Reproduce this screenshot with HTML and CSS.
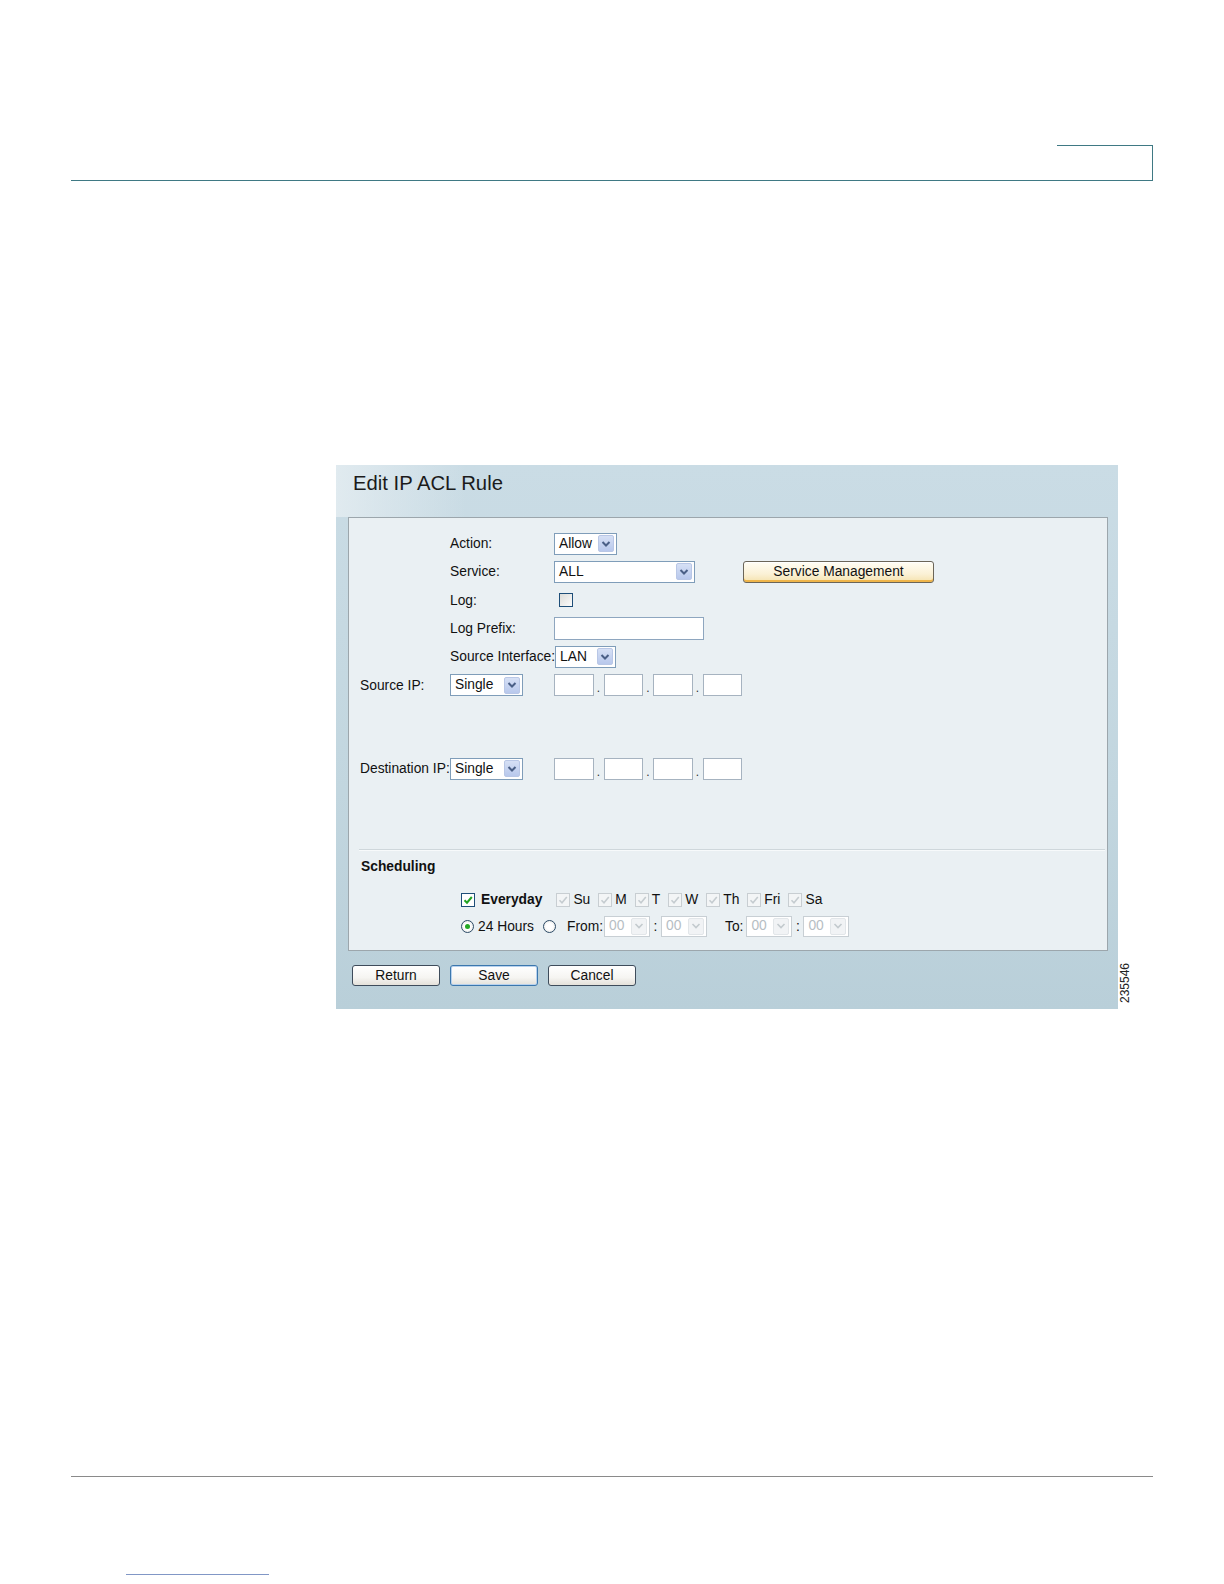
FILE: index.html
```html
<!DOCTYPE html>
<html>
<head>
<meta charset="utf-8">
<title>Edit IP ACL Rule</title>
<link rel="stylesheet" href="styles.css">
</head>
<body>
<div class="page">
  <header class="top"><div class="tab"></div></header>

  <section class="panel">
    <h1 class="panel-title">Edit IP ACL Rule</h1>
    <div class="box">
      <div class="form">
        <div class="row">
          <span class="c1"></span><span class="c2">Action:</span>
          <span class="sel w63"><span class="val">Allow</span><span class="arrow"><svg viewBox="0 0 10 8" width="10" height="8"><path d="M1.5 2 L5 5.5 L8.5 2" fill="none" stroke="#4a5f86" stroke-width="2"/></svg></span></span>
        </div>
        <div class="row">
          <span class="c1"></span><span class="c2">Service:</span>
          <span class="sel w140"><span class="val">ALL</span><span class="arrow"><svg viewBox="0 0 10 8" width="10" height="8"><path d="M1.5 2 L5 5.5 L8.5 2" fill="none" stroke="#4a5f86" stroke-width="2"/></svg></span></span>
          <button class="btn-sm">Service Management</button>
        </div>
        <div class="row">
          <span class="c1"></span><span class="c2">Log:</span>
          <span class="cb cb-log"></span>
        </div>
        <div class="row">
          <span class="c1"></span><span class="c2">Log Prefix:</span>
          <span class="input w150"></span>
        </div>
        <div class="row">
          <span class="c1"></span><span class="c2">Source Interface:</span>
          <span class="sel w61"><span class="val">LAN</span><span class="arrow"><svg viewBox="0 0 10 8" width="10" height="8"><path d="M1.5 2 L5 5.5 L8.5 2" fill="none" stroke="#4a5f86" stroke-width="2"/></svg></span></span>
        </div>
        <div class="row">
          <span class="c1">Source IP:</span>
          <span class="c2"><span class="sel w73"><span class="val">Single</span><span class="arrow"><svg viewBox="0 0 10 8" width="10" height="8"><path d="M1.5 2 L5 5.5 L8.5 2" fill="none" stroke="#4a5f86" stroke-width="2"/></svg></span></span></span>
          <span class="ip"><span class="octet"></span><span class="dot">.</span><span class="octet"></span><span class="dot">.</span><span class="octet"></span><span class="dot">.</span><span class="octet"></span></span>
        </div>
        <div class="row row-dest">
          <span class="c1">Destination IP:</span>
          <span class="c2"><span class="sel w73"><span class="val">Single</span><span class="arrow"><svg viewBox="0 0 10 8" width="10" height="8"><path d="M1.5 2 L5 5.5 L8.5 2" fill="none" stroke="#4a5f86" stroke-width="2"/></svg></span></span></span>
          <span class="ip"><span class="octet"></span><span class="dot">.</span><span class="octet"></span><span class="dot">.</span><span class="octet"></span><span class="dot">.</span><span class="octet"></span></span>
        </div>
      </div>

      <div class="sched">
        <div class="sched-title">Scheduling</div>
        <div class="sched-row">
          <span class="cb cb-on"><svg viewBox="0 0 12 12" width="12" height="12"><path d="M2.5 6.2 L5 8.7 L9.8 3" fill="none" stroke="#22a322" stroke-width="2"/></svg></span>
          <span class="every">Everyday</span>
          <span class="day"><span class="cb cb-dis"><svg viewBox="0 0 12 12" width="12" height="12"><path d="M2.5 6.2 L5 8.7 L9.8 3" fill="none" stroke="#c5ccd0" stroke-width="1.6"/></svg></span>Su</span>
          <span class="day"><span class="cb cb-dis"><svg viewBox="0 0 12 12" width="12" height="12"><path d="M2.5 6.2 L5 8.7 L9.8 3" fill="none" stroke="#c5ccd0" stroke-width="1.6"/></svg></span>M</span>
          <span class="day"><span class="cb cb-dis"><svg viewBox="0 0 12 12" width="12" height="12"><path d="M2.5 6.2 L5 8.7 L9.8 3" fill="none" stroke="#c5ccd0" stroke-width="1.6"/></svg></span>T</span>
          <span class="day"><span class="cb cb-dis"><svg viewBox="0 0 12 12" width="12" height="12"><path d="M2.5 6.2 L5 8.7 L9.8 3" fill="none" stroke="#c5ccd0" stroke-width="1.6"/></svg></span>W</span>
          <span class="day"><span class="cb cb-dis"><svg viewBox="0 0 12 12" width="12" height="12"><path d="M2.5 6.2 L5 8.7 L9.8 3" fill="none" stroke="#c5ccd0" stroke-width="1.6"/></svg></span>Th</span>
          <span class="day"><span class="cb cb-dis"><svg viewBox="0 0 12 12" width="12" height="12"><path d="M2.5 6.2 L5 8.7 L9.8 3" fill="none" stroke="#c5ccd0" stroke-width="1.6"/></svg></span>Fri</span>
          <span class="day"><span class="cb cb-dis"><svg viewBox="0 0 12 12" width="12" height="12"><path d="M2.5 6.2 L5 8.7 L9.8 3" fill="none" stroke="#c5ccd0" stroke-width="1.6"/></svg></span>Sa</span>
        </div>
        <div class="sched-row">
          <span class="radio radio-on"></span><span class="r-label">24 Hours</span>
          <span class="radio radio-from"></span><span class="from">From:</span>
          <span class="sel sel-dis w46"><span class="val">00</span><span class="arrow"><svg viewBox="0 0 10 8" width="10" height="8"><path d="M1.5 2 L5 5.5 L8.5 2" fill="none" stroke="#c3cace" stroke-width="1.6"/></svg></span></span>
          <span class="colon">:</span>
          <span class="sel sel-dis w46"><span class="val">00</span><span class="arrow"><svg viewBox="0 0 10 8" width="10" height="8"><path d="M1.5 2 L5 5.5 L8.5 2" fill="none" stroke="#c3cace" stroke-width="1.6"/></svg></span></span>
          <span class="to">To:</span>
          <span class="sel sel-dis w46"><span class="val">00</span><span class="arrow"><svg viewBox="0 0 10 8" width="10" height="8"><path d="M1.5 2 L5 5.5 L8.5 2" fill="none" stroke="#c3cace" stroke-width="1.6"/></svg></span></span>
          <span class="colon">:</span>
          <span class="sel sel-dis w46"><span class="val">00</span><span class="arrow"><svg viewBox="0 0 10 8" width="10" height="8"><path d="M1.5 2 L5 5.5 L8.5 2" fill="none" stroke="#c3cace" stroke-width="1.6"/></svg></span></span>
        </div>
      </div>
    </div>

    <div class="buttons">
      <button class="btn">Return</button>
      <button class="btn btn-save">Save</button>
      <button class="btn">Cancel</button>
    </div>
    <span class="figno">235546</span>
  </section>

  <footer class="foot"></footer>
  <div class="link-line"></div>
</div>
</body>
</html>
```

FILE: styles.css
```css
* { box-sizing: border-box; }
html, body { margin: 0; padding: 0; background: #fff; }
body { font-family: "Liberation Sans", Arial, sans-serif; color: #111; }

.page { width: 1224px; height: 1584px; padding-left: 71px; overflow: hidden; }

.top {
  width: 1082px;
  height: 181px;
  padding-top: 145px;
  border-bottom: 1px solid #3f7984;
  display: flex;
  justify-content: flex-end;
}
.tab {
  width: 96px;
  height: 35px;
  border-top: 1px solid #3f7984;
  border-right: 1px solid #3f7984;
}

.panel {
  position: relative;
  width: 782px;
  height: 544px;
  margin-top: 284px;
  margin-left: 265px;
  background: linear-gradient(to bottom, #cadce5 0%, #c2d6df 60%, #b9cfd9 100%);
}
.panel::before {
  content: "";
  position: absolute;
  left: 0; top: 0; width: 130px; height: 52px;
  background: linear-gradient(to right, rgba(230,238,242,0.8), rgba(230,238,242,0));
  pointer-events: none;
}
.panel-title {
  position: relative;
  margin: 0;
  height: 52px;
  padding: 6px 0 0 17px;
  font-size: 20.3px;
  font-weight: normal;
  line-height: 24px;
  color: #1b1b1b;
}

.box {
  margin-left: 12px;
  width: 760px;
  height: 434px;
  border: 1px solid #9ca6ac;
  background: #eaf0f3;
  padding-top: 11.5px;
}

.form { padding-left: 11px; font-size: 13.8px; }
.row { display: flex; align-items: center; height: 28.3px; white-space: nowrap; }
.row-dest { margin-top: 55.5px; }
.c1 { flex: 0 0 90px; }
.c2 { flex: 0 0 auto; min-width: 104px; display: flex; align-items: center; }

.sel {
  display: inline-flex;
  align-items: center;
  justify-content: space-between;
  height: 22px;
  background: #fff;
  border: 1px solid #7f9db9;
  padding: 0 2px 0 4px;
  color: #111;
}
.sel .val { line-height: 18px; }
.arrow {
  width: 16px;
  height: 17px;
  border-radius: 2px;
  background: linear-gradient(to bottom, #d6e0f5, #b8c8ec);
  border: 1px solid #b9c7e6;
  display: flex;
  align-items: center;
  justify-content: center;
}
.w63 { width: 63px; }
.w140 { width: 140.5px; }
.w61 { width: 61px; }
.w73 { width: 73px; }
.w46 { width: 46px; height: 21.5px; }

.sel-dis { border-color: #c8cfd4; color: #b6bec4; }
.sel-dis .arrow { background: #f1f3f5; border-color: #e2e6e9; }

.btn-sm {
  margin-left: 48.5px;
  width: 191px;
  height: 22px;
  font-family: "Liberation Sans", Arial, sans-serif;
  font-size: 13.8px;
  color: #111;
  border: 1px solid #6b6558;
  border-radius: 3px;
  background: linear-gradient(to bottom, #fffdf4 0%, #fbf1d6 60%, #f5e2ad 100%);
  box-shadow: inset 0 -2px 0 #efb54a, inset 0 1px 0 #fff;
  padding: 0;
}

.cb {
  display: inline-flex;
  align-items: center;
  justify-content: center;
  width: 14px;
  height: 14px;
  border: 1px solid #1e4e78;
  background: linear-gradient(135deg, #dcdcd8, #fbfbfb);
  flex: 0 0 14px;
}
.cb-log { margin-left: 5px; }
.cb-on { background: #fff; }
.cb-dis { border-color: #c8ced2; background: #f3f5f6; }

.input { display: inline-block; height: 22.5px; background: #fff; border: 1px solid #8ea6bf; }
.w150 { width: 150px; }

.ip { display: flex; align-items: center; }
.octet { width: 39.5px; height: 22.5px; background: #fff; border: 1px solid #a6b3c0; }
.dot { width: 10px; text-align: center; font-size: 12px; line-height: 22px; padding-top: 6px; color: #333; }

.sched {
  margin: 65.5px 2px 0 10px;
  border-top: 1px solid #cfd7db;
  box-shadow: inset 0 1px 0 #f7fafb;
  font-size: 13.8px;
}
.sched-title {
  font-weight: bold;
  padding: 6.3px 0 0 2px;
  line-height: 22px;
  height: 28px;
}
.sched-row {
  display: flex;
  align-items: center;
  height: 22px;
  padding-left: 102px;
  white-space: nowrap;
  margin-top: 11.3px;
}
.sched-row + .sched-row { margin-top: 4.6px; }
.every { font-weight: bold; margin-left: 6px; margin-right: 14px; }
.day { display: inline-flex; align-items: center; margin-right: 8px; color: #111; }
.day .cb { margin-right: 3px; }

.radio {
  width: 13px; height: 13px;
  border-radius: 50%;
  border: 1px solid #2c4a66;
  background: radial-gradient(circle, #fff 40%, #dedfdb 100%);
  display: inline-block;
  position: relative;
}
.radio-on::after {
  content: "";
  position: absolute;
  left: 3px; top: 3px; width: 5px; height: 5px;
  border-radius: 50%;
  background: #24a824;
}
.r-label { margin-left: 4px; }
.radio-from { margin-left: 9px; }
.from { margin-left: 11px; margin-right: 1px; }
.colon { width: 11px; text-align: center; }
.to { margin-left: 18px; margin-right: 3px; }

.buttons { display: flex; gap: 10px; margin: 14px 0 0 16px; }
.btn {
  width: 88px;
  height: 21px;
  padding: 0;
  font-family: "Liberation Sans", Arial, sans-serif;
  font-size: 13.8px;
  color: #111;
  border: 1px solid #3e4c5b;
  border-radius: 3px;
  background: linear-gradient(to bottom, #ffffff 0%, #f6f5f2 60%, #e4e1da 100%);
}
.btn-save { border-color: #3c77ad; box-shadow: inset 0 0 0 1px #b8d2ee; }

.figno {
  position: absolute;
  left: 783px;
  top: 498px;
  writing-mode: vertical-rl;
  transform: rotate(180deg);
  font-size: 12px;
  color: #222;
  line-height: 12px;
}

.foot { width: 1082px; margin-top: 467px; border-top: 1px solid #8a8a8a; height: 1px; }
.link-line { margin-left: 55px; margin-top: 97px; width: 142.5px; height: 1px; background: #8197c6; }
```
